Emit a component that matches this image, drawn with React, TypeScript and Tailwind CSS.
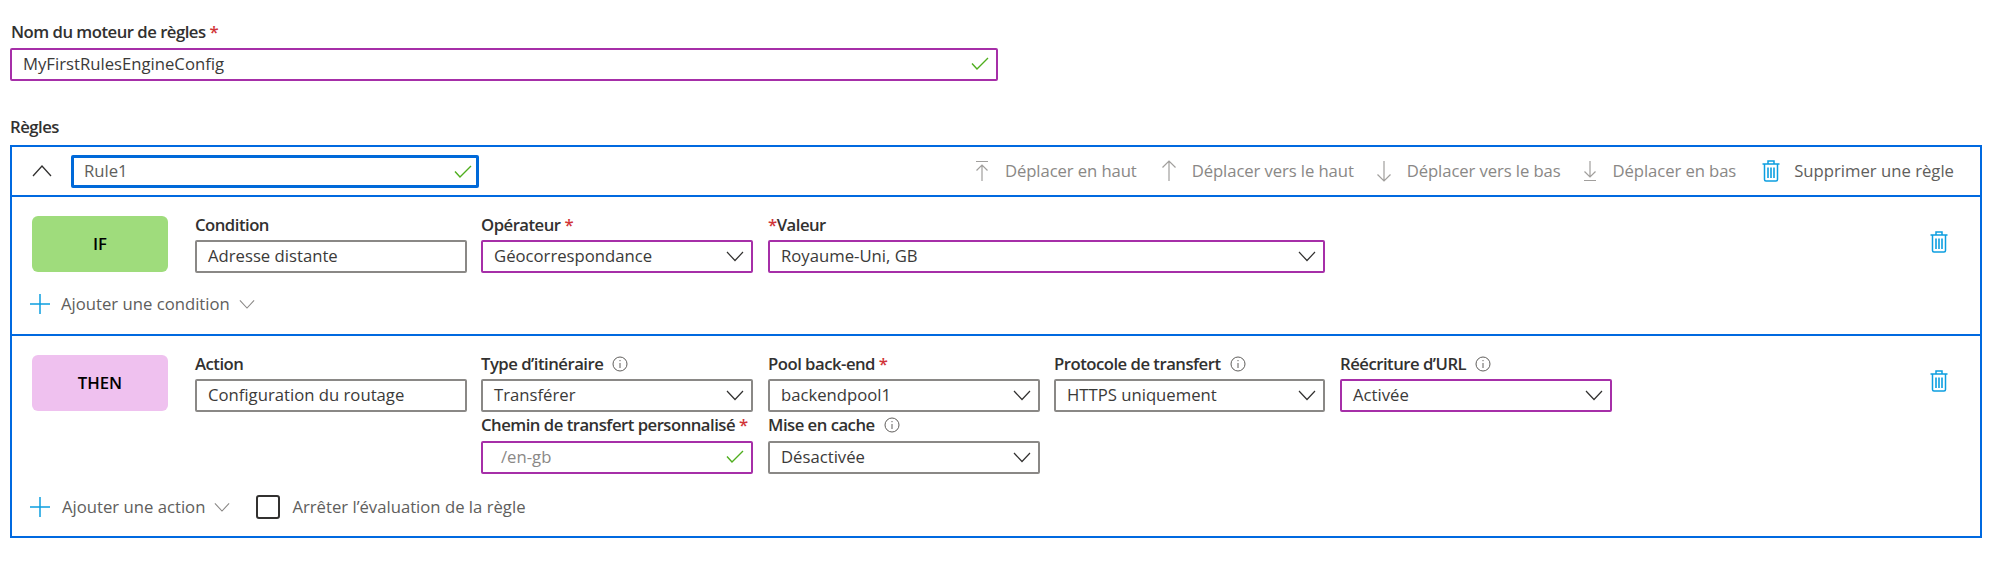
import React from "react";

const PURPLE = "border-[#a62fa8]";
const GRAY = "border-[#8a8886]";

function Star() {
  return <span className="text-[#d13438]">*</span>;
}

function Check() {
  return (
    <svg width="18" height="13" viewBox="0 0 18 13" fill="none" stroke="#4fae1e" strokeWidth="1.4" className="shrink-0">
      <path d="M1 6.5 L6 12 L17 1" />
    </svg>
  );
}

function Chevron({ size = 18, color = "#323130" }: { size?: number; color?: string }) {
  return (
    <svg width={size} height={size} viewBox="0 0 18 18" fill="none" stroke={color} strokeWidth="1.2" className="shrink-0">
      <path d="M1 5 L9 13.5 L17 5" />
    </svg>
  );
}

function Info() {
  return (
    <svg width="16" height="16" viewBox="0 0 16 16" fill="none" stroke="#605e5c" strokeWidth="1" className="shrink-0">
      <circle cx="8" cy="8" r="7" />
      <path d="M8 7 V12 M8 4 V5.2" />
    </svg>
  );
}

function Trash({ className = "" }: { className?: string }) {
  return (
    <svg width="18" height="22" viewBox="0 0 18 22" fill="none" stroke="#0c9ee0" strokeWidth="1.5" className={`shrink-0 ${className}`}>
      <path d="M0.5 4 H17.5 M6 4 V1 H12 V4 M2.5 4 V19.5 Q2.5 21 4 21 H14 Q15.5 21 15.5 19.5 V4" />
      <path d="M6 7.5 V18 M9 7.5 V18 M12 7.5 V18" strokeWidth="1.6" />
    </svg>
  );
}

function Plus() {
  return (
    <svg width="20" height="20" viewBox="0 0 20 20" fill="none" stroke="#0c9ee0" strokeWidth="1.5" className="shrink-0">
      <path d="M10 0 V20 M0 10 H20" />
    </svg>
  );
}

function MoveIcon({ d }: { d: string }) {
  return (
    <svg width="16" height="22" viewBox="0 0 16 22" fill="none" stroke="#a19f9d" strokeWidth="1.2" className="shrink-0">
      <path d={d} />
    </svg>
  );
}

function Box({ children, purple, width = "w-[272px]", className = "" }: { children: React.ReactNode; purple?: boolean; width?: string; className?: string }) {
  return (
    <div className={`flex h-[33px] items-center justify-between rounded-[2px] border-2 bg-white pb-[2px] pl-[11px] pr-[7px] text-[#3b3a39] ${purple ? PURPLE : GRAY} ${width} ${className}`}>
      {children}
    </div>
  );
}

function Select({ value, purple, width }: { value: string; purple?: boolean; width?: string }) {
  return (
    <Box purple={purple} width={width}>
      <span>{value}</span>
      <Chevron />
    </Box>
  );
}

function Label({ children, className = "" }: { children: React.ReactNode; className?: string }) {
  return <div className={`flex h-[17px] items-center gap-[9px] whitespace-nowrap font-semibold tracking-[-0.5px] text-[#323130] ${className}`}>{children}</div>;
}

function MoveAction({ d, label, className = "" }: { d: string; label: string; className?: string }) {
  return (
    <div className={`flex items-center gap-[15px] tracking-[-0.1px] text-[#8a8886] ${className}`}>
      <MoveIcon d={d} />
      <span>{label}</span>
    </div>
  );
}

export default function App() {
  return (
    <div className="h-[571px] bg-white pl-[10px] pr-[18px] pt-[23px] text-[16.7px] leading-[20px] font-['Open_Sans',sans-serif]">
      <Label className="ml-[1px]">
        <span>Nom du moteur de règles <Star /></span>
      </Label>
      <Box purple width="w-[988px]" className="mt-[8px] pr-[5px]">
        <span>MyFirstRulesEngineConfig</span>
        <Check />
      </Box>

      <Label className="mt-[37px]">Règles</Label>

      <div className="mt-[10px] border-2 border-[#0069e0]">
        {/* header row */}
        <div className="flex h-[50px] items-center border-b-2 border-[#0069e0] pl-[20px] pr-[26px]">
          <svg width="20" height="20" viewBox="0 0 20 20" fill="none" stroke="#323130" strokeWidth="1.3" className="shrink-0">
            <path d="M1 15 L10 5 L19 15" />
          </svg>
          <div className="ml-[19px] flex h-[33px] w-[408px] items-center justify-between rounded-[2px] border-[3px] border-[#0069d9] pl-[10px] pr-[4px] text-[#605e5c]">
            <span>Rule1</span>
            <Check />
          </div>
          <div className="ml-auto flex items-center">
            <MoveAction d="M2 1.5 H14 M8 5 V21 M2.5 10.5 L8 5 L13.5 10.5" label="Déplacer en haut" />
            <MoveAction className="ml-[24px]" d="M8 1 V21 M1.5 7.5 L8 1 L14.5 7.5" label="Déplacer vers le haut" />
            <MoveAction className="ml-[22px]" d="M8 1 V21 M1.5 14.5 L8 21 L14.5 14.5" label="Déplacer vers le bas" />
            <MoveAction className="ml-[21px]" d="M8 1 V17 M2.5 11.5 L8 17 L13.5 11.5 M2 20.5 H14" label="Déplacer en bas" />
            <div className="ml-[26px] flex items-center gap-[14px] text-[#605e5c]">
              <Trash />
              <span>Supprimer une règle</span>
            </div>
          </div>
        </div>

        {/* IF row */}
        <div className="h-[139px] border-b-2 border-[#0069e0] pl-[20px] pr-[32px] pt-[19px]">
          <div className="flex items-start">
            <div className="flex h-[56px] w-[136px] shrink-0 items-center justify-center rounded-[6px] bg-[#9fdc7c] font-semibold text-black">IF</div>
            <div className="ml-[27px]">
              <Label>Condition</Label>
              <Box className="mt-[7px]"><span>Adresse distante</span></Box>
            </div>
            <div className="ml-[14px]">
              <Label><span>Opérateur <Star /></span></Label>
              <div className="mt-[7px]"><Select value="Géocorrespondance" purple /></div>
            </div>
            <div className="ml-[15px]">
              <Label><span><Star />Valeur</span></Label>
              <div className="mt-[7px]"><Select value="Royaume-Uni, GB" purple width="w-[557px]" /></div>
            </div>
            <Trash className="ml-auto mt-[15px]" />
          </div>
          <div className="-ml-[2px] mt-[21px] flex items-center gap-[11px] text-[#605e5c]">
            <Plus />
            <span className="flex items-center gap-[9px]">Ajouter une condition <Chevron size={16} color="#8a8886" /></span>
          </div>
        </div>

        {/* THEN row */}
        <div className="h-[200px] pl-[20px] pr-[32px] pt-[19px]">
          <div className="flex items-start">
            <div className="flex h-[56px] w-[136px] shrink-0 items-center justify-center rounded-[6px] bg-[#efc1ef] font-semibold text-black">THEN</div>
            <div className="ml-[27px]">
              <Label>Action</Label>
              <Box className="mt-[7px]"><span>Configuration du routage</span></Box>
            </div>
            <div className="ml-[14px]">
              <Label>Type d’itinéraire <Info /></Label>
              <div className="mt-[7px]"><Select value="Transférer" /></div>
              <Label className="mt-[4px]"><span>Chemin de transfert personnalisé <Star /></span></Label>
              <Box purple className="mt-[8px] pl-[18px] pr-[5px]">
                <span className="text-[#8a8886]">/en-gb</span>
                <Check />
              </Box>
            </div>
            <div className="ml-[15px]">
              <Label><span>Pool back-end <Star /></span></Label>
              <div className="mt-[7px]"><Select value="backendpool1" /></div>
              <Label className="mt-[4px]">Mise en cache <Info /></Label>
              <div className="mt-[8px]"><Select value="Désactivée" /></div>
            </div>
            <div className="ml-[14px]">
              <Label>Protocole de transfert <Info /></Label>
              <div className="mt-[7px]"><Select value="HTTPS uniquement" width="w-[271px]" /></div>
            </div>
            <div className="ml-[15px]">
              <Label>Réécriture d’URL <Info /></Label>
              <div className="mt-[7px]"><Select value="Activée" purple /></div>
            </div>
            <Trash className="ml-auto mt-[15px]" />
          </div>
          <div className="-ml-[2px] mt-[21px] flex items-center text-[#605e5c]">
            <Plus />
            <span className="ml-[12px] flex items-center gap-[9px]">Ajouter une action <Chevron size={16} color="#8a8886" /></span>
            <div className="ml-[26px] h-[24px] w-[24px] rounded-[3px] border-2 border-[#323130]" />
            <span className="ml-[12px]">Arrêter l’évaluation de la règle</span>
          </div>
        </div>
      </div>
    </div>
  );
}
